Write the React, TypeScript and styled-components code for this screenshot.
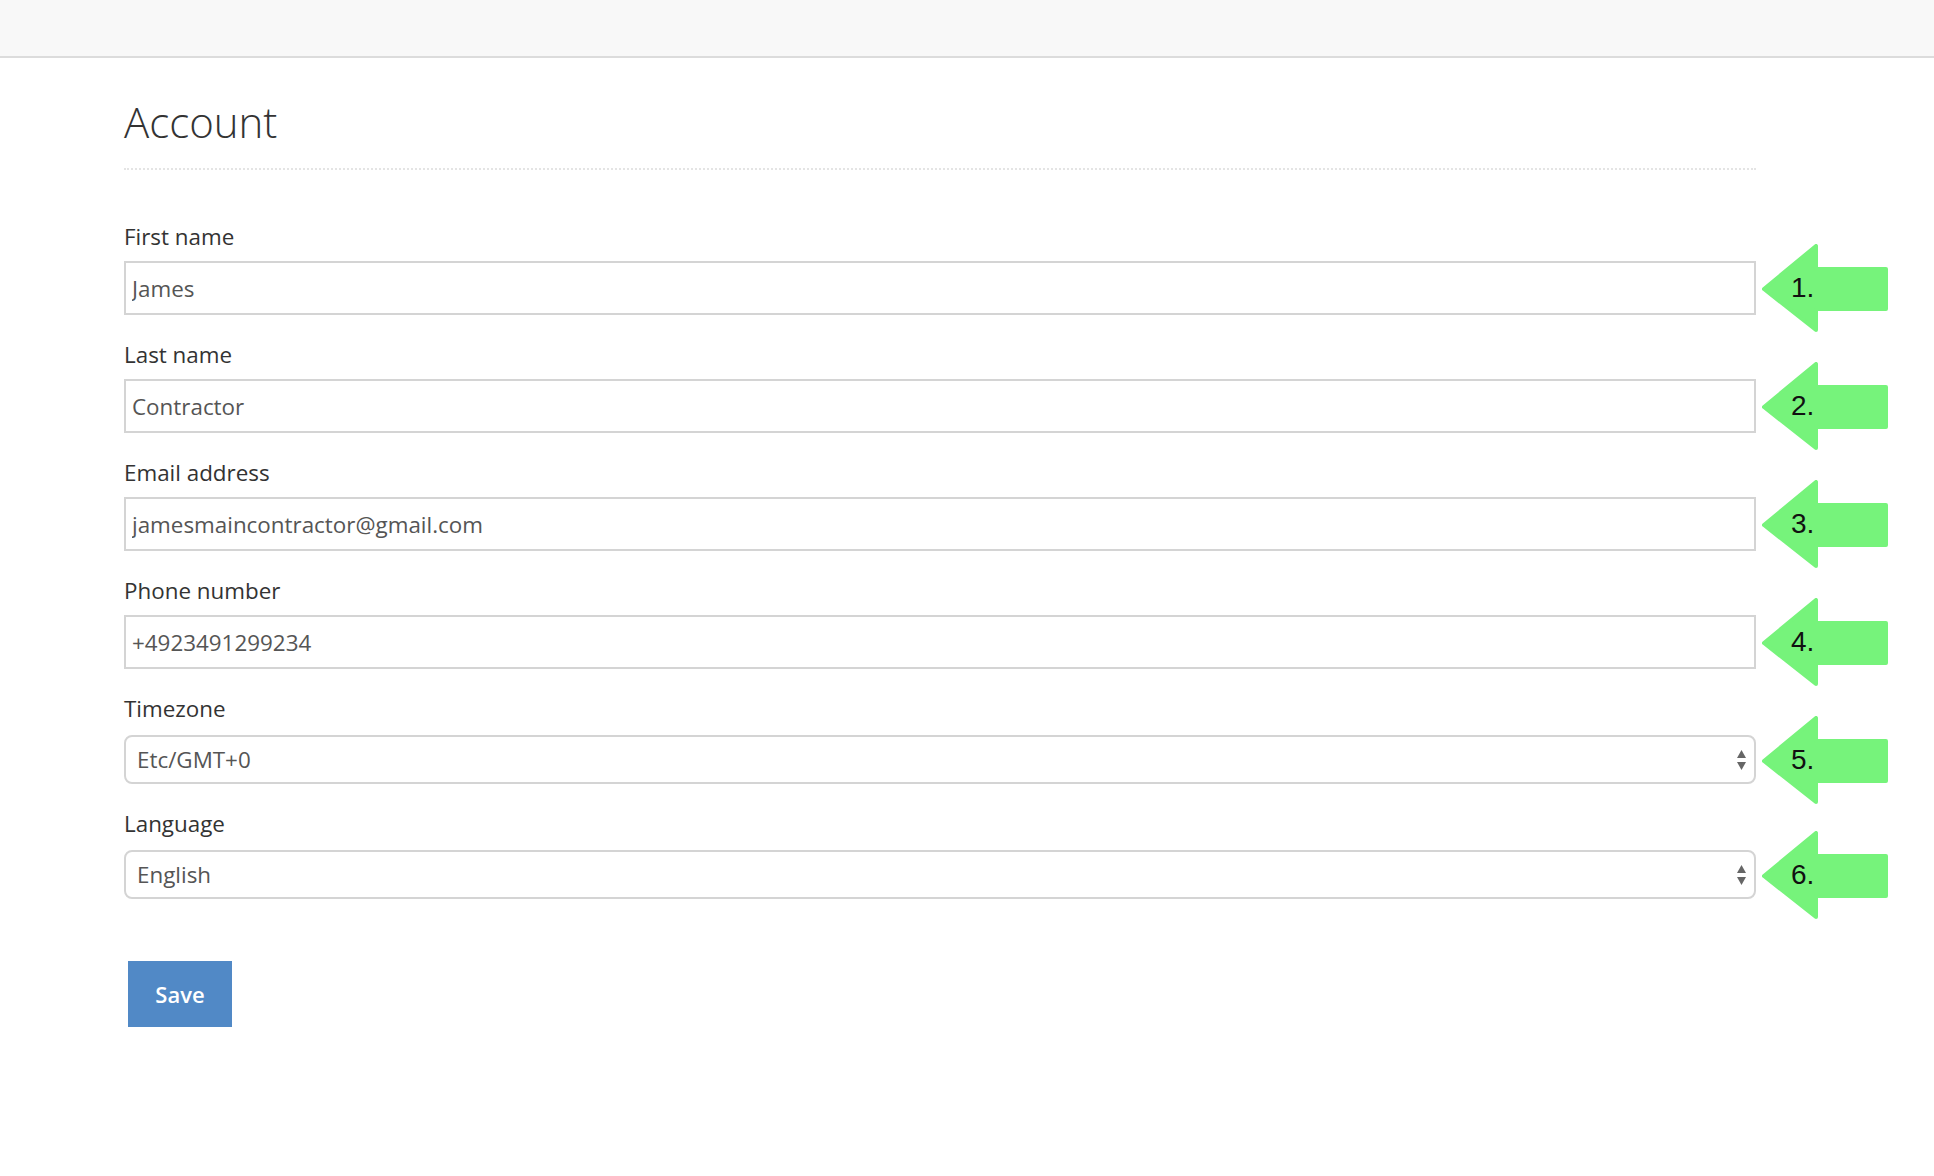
import React, { useState } from "react";
import styled, { createGlobalStyle } from "styled-components";

const GlobalStyle = createGlobalStyle`
  body {
    margin: 0;
    background: #ffffff;
    font-family: "Open Sans", "Liberation Sans", sans-serif;
    color: #333333;
  }
`;

const TopBar = styled.div`
  height: 56px;
  background-color: #f8f8f8;
  border-bottom: 2px solid #dcdcdc;
`;

const Main = styled.main`
  padding: 40px 0 80px 124px;
`;

const FormColumn = styled.form`
  width: 1764px;
  display: flex;
  flex-direction: column;
`;

const Heading = styled.h1`
  width: 1632px;
  margin: 0 0 52px 0;
  padding-bottom: 23px;
  border-bottom: 2px dotted #e4e4e4;
  font-size: 42px;
  line-height: 47px;
  font-weight: 300;
  color: #333333;
`;

const FieldGroup = styled.div`
  display: flex;
  flex-direction: column;
  margin-bottom: 25px;
`;

const Label = styled.label<{ $gap: number }>`
  font-size: 22.4px;
  line-height: 30px;
  color: #333333;
  margin-bottom: ${(p) => p.$gap}px;
`;

const Row = styled.div`
  display: flex;
  align-items: center;
  gap: 6px;
`;

const CalloutSlot = styled.div`
  height: 0;
  display: flex;
  align-items: center;
  overflow: visible;
`;

const TextInput = styled.input`
  box-sizing: border-box;
  width: 1632px;
  height: 54px;
  margin: 0;
  padding: 0 6px;
  border: 2px solid #d4d4d4;
  border-radius: 0;
  font-family: "Open Sans", "Liberation Sans", sans-serif;
  font-size: 22.4px;
  color: #555555;
  background: #ffffff;
  &:focus {
    outline: none;
  }
`;

const SelectWrap = styled.div`
  position: relative;
  width: 1632px;
  height: 49px;

  svg {
    position: absolute;
    right: 9px;
    top: 50%;
    transform: translateY(-50%);
    pointer-events: none;
  }
`;

const Select = styled.select`
  box-sizing: border-box;
  width: 100%;
  height: 100%;
  margin: 0;
  padding: 0 40px 0 11px;
  border: 2px solid #d4d4d4;
  border-radius: 8px;
  background: #ffffff;
  appearance: none;
  -webkit-appearance: none;
  font-family: "Open Sans", "Liberation Sans", sans-serif;
  font-size: 22.4px;
  color: #555555;
  &:focus {
    outline: none;
  }
`;

const SaveButton = styled.button`
  align-self: flex-start;
  width: 104px;
  height: 66px;
  margin: 37px 0 0 4px;
  border: none;
  border-radius: 0;
  background-color: #5189c6;
  color: #ffffff;
  font-family: "Open Sans", "Liberation Sans", sans-serif;
  font-size: 22px;
  font-weight: 600;
  cursor: pointer;
`;

const ArrowText = styled.text`
  font-family: "Liberation Sans", Arial, sans-serif;
  font-size: 28px;
  fill: #111111;
`;

function Callout({ n }: { n: number }) {
  return (
    <CalloutSlot>
      <svg width="126" height="88" viewBox="0 0 126 88">
        <polygon
          points="2,45 54,2 54,25 124,25 124,65 54,65 54,86"
          fill="#76f37b"
          stroke="#76f37b"
          strokeWidth="4"
          strokeLinejoin="round"
        />
        <ArrowText x="29" y="53">
          {n}.
        </ArrowText>
      </svg>
    </CalloutSlot>
  );
}

function UpDown() {
  return (
    <svg width="11" height="22" viewBox="0 0 11 22">
      <polygon points="5.5,1 10,9 1,9" fill="#666666" />
      <polygon points="1,13 10,13 5.5,21" fill="#666666" />
    </svg>
  );
}

interface TextField {
  key: string;
  label: string;
  value: string;
}

const textFields: TextField[] = [
  { key: "first", label: "First name", value: "James" },
  { key: "last", label: "Last name", value: "Contractor" },
  { key: "email", label: "Email address", value: "jamesmaincontractor@gmail.com" },
  { key: "phone", label: "Phone number", value: "+4923491299234" },
];

const selectFields = [
  { key: "tz", label: "Timezone", value: "Etc/GMT+0", options: ["Etc/GMT+0", "Etc/GMT+1", "Europe/Berlin"] },
  { key: "lang", label: "Language", value: "English", options: ["English", "Deutsch", "Français"] },
];

function App() {
  const [values, setValues] = useState<Record<string, string>>(() => {
    const v: Record<string, string> = {};
    [...textFields, ...selectFields].forEach((f) => (v[f.key] = f.value));
    return v;
  });

  function update(key: string, val: string) {
    setValues({ ...values, [key]: val });
  }

  return (
    <>
      <GlobalStyle />
      <TopBar />
      <Main>
        <FormColumn onSubmit={(e) => e.preventDefault()}>
          <Heading>Account</Heading>
          {textFields.map((f, i) => (
            <FieldGroup key={f.key}>
              <Label $gap={9} htmlFor={f.key}>
                {f.label}
              </Label>
              <Row>
                <TextInput
                  id={f.key}
                  value={values[f.key]}
                  onChange={(e) => update(f.key, e.target.value)}
                />
                <Callout n={i + 1} />
              </Row>
            </FieldGroup>
          ))}
          {selectFields.map((f, i) => (
            <FieldGroup key={f.key}>
              <Label $gap={11} htmlFor={f.key}>
                {f.label}
              </Label>
              <Row>
                <SelectWrap>
                  <Select
                    id={f.key}
                    value={values[f.key]}
                    onChange={(e) => update(f.key, e.target.value)}
                  >
                    {f.options.map((o) => (
                      <option key={o}>{o}</option>
                    ))}
                  </Select>
                  <UpDown />
                </SelectWrap>
                <Callout n={textFields.length + i + 1} />
              </Row>
            </FieldGroup>
          ))}
          <SaveButton type="submit">Save</SaveButton>
        </FormColumn>
      </Main>
    </>
  );
}

export default App;
